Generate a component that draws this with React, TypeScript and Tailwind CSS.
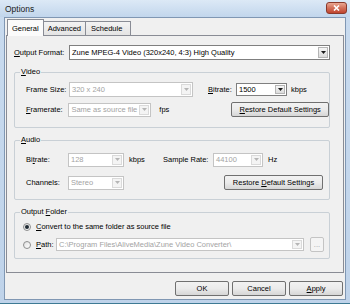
import React from "react";

const font = { fontFamily: '"Liberation Sans", Arial, sans-serif' };

function Arrow({ disabled }: { disabled?: boolean }) {
  return (
    <svg width="5" height="3" viewBox="0 0 5 3">
      <path d="M0 0 L5 0 L2.5 3 Z" fill={disabled ? "#b5b5b5" : "#1a1a1a"} />
    </svg>
  );
}

function Combo({
  className,
  text,
  disabled,
}: {
  className: string;
  text: string;
  disabled?: boolean;
}) {
  return (
    <div
      className={`flex items-stretch bg-white border ${
        disabled ? "border-[#c4c4c4]" : "border-[#7f7f7f]"
      } ${className}`}
    >
      <div
        className={`flex-1 flex items-center pl-[2px] overflow-hidden whitespace-nowrap ${
          disabled ? "text-[#a3a3a3]" : "text-black"
        }`}
      >
        {text}
      </div>
      <div className="flex items-center p-[1px]">
        <div
          className={`w-[10px] h-full flex items-center justify-center border ${
            disabled
              ? "border-[#dadada] bg-[#f4f4f4]"
              : "border-[#b5b5b5] bg-gradient-to-b from-[#f6f6f6] to-[#dcdcdc]"
          }`}
        >
          <Arrow disabled={disabled} />
        </div>
      </div>
    </div>
  );
}

function Btn({ className, children }: { className: string; children: React.ReactNode }) {
  return (
    <div
      className={`flex items-center justify-center border border-[#707070] rounded-[2px] bg-gradient-to-b from-[#f2f2f2] via-[#ebebeb] to-[#d6d6d6] text-black ${className}`}
    >
      {children}
    </div>
  );
}

function Group({
  className,
  legend,
  children,
}: {
  className: string;
  legend: React.ReactNode;
  children: React.ReactNode;
}) {
  return (
    <div className={`relative border border-[#c9d0d6] rounded-[2px] ${className}`}>
      <span className="absolute left-[5px] top-[-6px] bg-[#f0f0f0] px-[1px] leading-[10px] text-black">
        {legend}
      </span>
      {children}
    </div>
  );
}

function Radio({ checked }: { checked?: boolean }) {
  return (
    <div className="w-[8px] h-[8px] rounded-full border border-[#8e8f8f] bg-gradient-to-br from-[#e0e0e0] to-[#ffffff] flex items-center justify-center">
      {checked && <div className="w-[4px] h-[4px] rounded-full bg-[#1f2a33]" />}
    </div>
  );
}

export default function App() {
  return (
    <div
      className="w-[350px] h-[304px] flex flex-col bg-gradient-to-b from-[#c9dbef] to-[#bfd3ea] text-[7.5px] text-black overflow-hidden"
      style={font}
    >
      {/* Title bar */}
      <div className="h-[17px] flex items-center justify-between pl-[5px] pr-[3px] bg-gradient-to-b from-[#dce9f6] to-[#c2d6ec]">
        <span className="text-[8.5px] leading-none text-[#1b1b1b] pt-[1px]">Options</span>
        <div className="w-[21px] h-[12px] mt-[-2px] rounded-[3px] border border-[#8a3a2c] bg-gradient-to-b from-[#e9a792] via-[#d2705a] to-[#c0442e] flex items-center justify-center">
          <svg width="7" height="6" viewBox="0 0 7 6">
            <path d="M1 0.5 L6 5.5 M6 0.5 L1 5.5" stroke="#ffffff" strokeWidth="1.6" />
          </svg>
        </div>
      </div>

      {/* Client area */}
      <div className="flex-1 mx-[4px] mb-[3px] border border-[#8097b3] bg-[#f0f0f0] flex flex-col">
        {/* tabs */}
        <div className="flex items-end h-[17px] pl-[2px] mt-[0px]">
          <div className="h-[17px] px-[4px] flex items-start pt-[3px] bg-[#fbfbfb] border border-b-0 border-[#898c95] relative z-10 mb-[-1px]">
            General
          </div>
          <div className="h-[14px] px-[4px] flex items-center bg-gradient-to-b from-[#f3f3f3] to-[#e4e4e4] border border-l-0 border-b-0 border-[#898c95]">
            Advanced
          </div>
          <div className="h-[14px] px-[5px] w-[45px] flex items-center bg-gradient-to-b from-[#f3f3f3] to-[#e4e4e4] border border-l-0 border-b-0 border-[#898c95]">
            Schedule
          </div>
        </div>

        {/* tab panel */}
        <div className="ml-[1px] mr-[1px] h-[238px] border border-[#898c95] bg-[#f0f0f0] flex flex-col pl-[7px] pr-[13px]">
          {/* Output format */}
          <div className="flex items-center mt-[9px] h-[15px]">
            <span className="w-[55px]">
              <u>O</u>utput Format:
            </span>
            <Combo className="w-[261px] h-[15px]" text="Zune MPEG-4 Video (320x240, 4:3) High Quality" />
          </div>

          {/* Video */}
          <Group className="mt-[12px] h-[56px]" legend={<><u>V</u>ideo</>}>
            <div className="flex items-center ml-[11px] mt-[9px] h-[15px]">
              <span className="w-[43px]">Frame Size:</span>
              <Combo className="w-[124px] h-[15px]" text="320 x 240" disabled />
              <span className="ml-[15px] w-[28px]">
                <u>B</u>itrate:
              </span>
              <Combo className="w-[51px] h-[13px]" text="1500" />
              <span className="ml-[4px]">kbps</span>
            </div>
            <div className="flex items-center ml-[11px] mt-[5px] h-[15px]">
              <span className="w-[43px]">
                <u>F</u>ramerate:
              </span>
              <Combo className="w-[84px] h-[14px]" text="Same as source file" disabled />
              <span className="ml-[8px]">fps</span>
              <Btn className="ml-[62px] w-[99px] h-[15px]">
                <span>
                  <u>R</u>estore Default Settings
                </span>
              </Btn>
            </div>
          </Group>

          {/* Audio */}
          <Group className="mt-[12px] h-[60px]" legend={<><u>A</u>udio</>}>
            <div className="flex items-center ml-[11px] mt-[12px] h-[13px]">
              <span className="w-[42px]">
                Bi<u>t</u>rate:
              </span>
              <Combo className="w-[56px] h-[14px]" text="128" disabled />
              <span className="ml-[5px] w-[34px]">kbps</span>
              <span className="w-[50px]">Sample Rate:</span>
              <Combo className="w-[50px] h-[14px]" text="44100" disabled />
              <span className="ml-[5px]">Hz</span>
            </div>
            <div className="flex items-center ml-[11px] mt-[9px] h-[15px]">
              <span className="w-[42px]">Channels:</span>
              <Combo className="w-[56px] h-[14px]" text="Stereo" disabled />
              <Btn className="ml-[100px] w-[99px] h-[15px]">
                <span>
                  Restore <u>D</u>efault Settings
                </span>
              </Btn>
            </div>
          </Group>

          {/* Output Folder */}
          <Group className="mt-[12px] h-[47px]" legend={<>Output <u>F</u>older</>}>
            <div className="flex items-center ml-[8px] mt-[9px] h-[10px]">
              <Radio checked />
              <span className="ml-[5px]">
                <u>C</u>onvert to the same folder as source file
              </span>
            </div>
            <div className="flex items-center ml-[8px] mt-[5px] h-[15px]">
              <Radio />
              <span className="ml-[5px] w-[20px]">
                <u>P</u>ath:
              </span>
              <Combo className="w-[248px] h-[13px]" text="C:\Program Files\AliveMedia\Zune Video Converter\" disabled />
              <div className="ml-[6px] w-[14px] h-[15px] border border-[#c4c4c4] rounded-[2px] bg-[#f4f4f4] flex items-center justify-center text-[#a3a3a3] leading-none">
                ...
              </div>
            </div>
          </Group>
        </div>

        {/* bottom buttons */}
        <div className="flex justify-end gap-[3px] mt-[8px] pr-[2px]">
          <Btn className="w-[54px] h-[15px]">OK</Btn>
          <Btn className="w-[54px] h-[15px]">Cancel</Btn>
          <Btn className="w-[54px] h-[15px]">
            <span>
              <u>A</u>pply
            </span>
          </Btn>
        </div>
      </div>
      <div className="h-[1px] bg-[#3e7a94]" />
    </div>
  );
}
